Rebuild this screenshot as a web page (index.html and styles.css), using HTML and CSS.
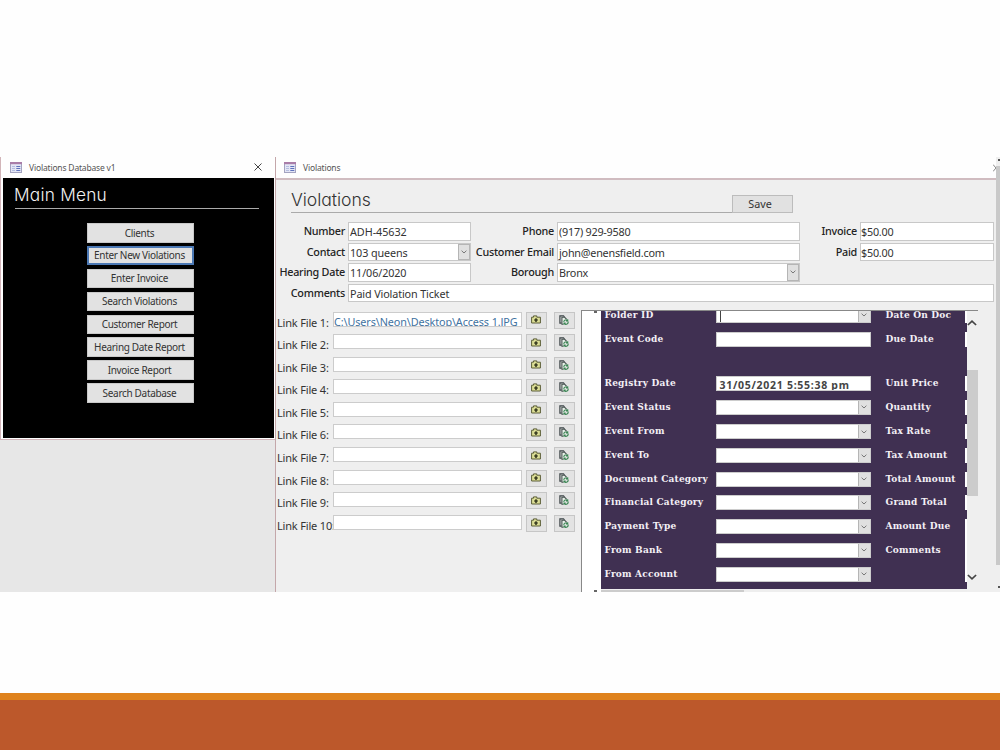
FILE: index.html
```html
<!DOCTYPE html>
<html lang="en">
<head>
<meta charset="utf-8">
<title>Violations Database</title>
<link rel="stylesheet" href="styles.css">
</head>
<body>
<svg class="defs" width="0" height="0">
  <symbol id="form" viewBox="0 0 12 11">
    <rect x=".5" y=".5" width="11" height="10" fill="#e4e6f5" stroke="#a3a3c0"/>
    <rect x="0" y="0" width="12" height="2.2" fill="#a97da8"/>
    <path d="M2 4.500h3M2 6.500h3M2 8.500h3" stroke="#b4bde0"/>
    <path d="M6.300 4.500h4M6.300 6.500h4M6.300 8.500h4" stroke="#5f72bc" stroke-width="1.200"/>
  </symbol>
  <symbol id="folder" viewBox="0 0 10 9">
    <path d="M.6 8V2.200h1.900V.9h3.300v1.300h3.600V8z" fill="#dcde96" stroke="#5c5f38" stroke-width="1"/>
    <path d="M5 3.300v3.600M3.300 5.100h3.400" stroke="#32361c" stroke-width="1.500"/>
  </symbol>
  <symbol id="files" viewBox="0 0 10 10">
    <path d="M2.600 8.200H.9V.8h3.600l1 1" fill="none" stroke="#3d4548" stroke-width="1.200"/>
    <path d="M4.500 9.200H2.900V2.300h2.800l2 2" fill="#e8f0ea" stroke="#46524f" stroke-width="1.100"/>
    <path d="M4.800 7a2.100 2.100 0 0 1 3.600-1.400M9 6.600a2.100 2.100 0 0 1-3.600 2M8.700 4.300v1.700H7M5 9.600V8.100h1.600" fill="none" stroke="#388451" stroke-width="1.100"/>
  </symbol>
  <symbol id="chev" viewBox="0 0 6 4"><path d="M.6.7 3 3 5.400.7" fill="none" stroke="#777" stroke-width="1"/></symbol>
  <symbol id="arrow" viewBox="0 0 10 6"><path d="M.9 5 5 1.200 9.100 5" fill="none" stroke="#444" stroke-width="1.700"/></symbol>
</svg>
<main class="slide">
  <div class="stage">
    <section class="left">
      <div class="menu-window">
        <header class="titlebar">
          <svg class="app"><use href="#form"/></svg><span>Violations Database v1</span>
          <svg class="close" viewBox="0 0 8 8"><path d="M.5.5l7 7M7.500.5l-7 7" stroke="#444" stroke-width="1"/></svg>
        </header>
        <div class="menu">
          <h1>Main Menu</h1>
          <nav>
            <button>Clients</button>
            <button class="focus">Enter New Violations</button>
            <button>Enter Invoice</button>
            <button>Search Violations</button>
            <button>Customer Report</button>
            <button>Hearing Date Report</button>
            <button>Invoice Report</button>
            <button>Search Database</button>
          </nav>
        </div>
      </div>
    </section>
    <section class="right">
      <header class="titlebar wide">
        <svg class="app"><use href="#form"/></svg><span>Violations</span>
      </header>
      <div class="heading"><h2>Violations</h2><button class="save">Save</button></div>
      <div class="fields">
        <label>Number</label><div class="in">ADH-45632</div><label>Phone</label><div class="in">(917) 929-9580</div><label>Invoice</label><div class="in money">$50.00</div>
        <label>Contact</label><div class="in q">103 queens<i><svg><use href="#chev"/></svg></i></div><label>Customer Email</label><div class="in mail">john@enensfield.com</div><label>Paid</label><div class="in money">$50.00</div>
        <label>Hearing Date</label><div class="in date">11/06/2020</div><label>Borough</label><div class="in">Bronx<i><svg><use href="#chev"/></svg></i></div><span></span><span></span>
        <label>Comments</label><div class="in all">Paid Violation Ticket</div>
      </div>
      <div class="lower">
        <div class="links">
          <div class="link"><label>Link File 1:</label><div class="path">C:\Users\Neon\Desktop\Access 1.JPG</div><b><svg class="fo"><use href="#folder"/></svg></b><b><svg class="fi"><use href="#files"/></svg></b></div>
          <div class="link"><label>Link File 2:</label><div class="path"></div><b><svg class="fo"><use href="#folder"/></svg></b><b><svg class="fi"><use href="#files"/></svg></b></div>
          <div class="link"><label>Link File 3:</label><div class="path"></div><b><svg class="fo"><use href="#folder"/></svg></b><b><svg class="fi"><use href="#files"/></svg></b></div>
          <div class="link"><label>Link File 4:</label><div class="path"></div><b><svg class="fo"><use href="#folder"/></svg></b><b><svg class="fi"><use href="#files"/></svg></b></div>
          <div class="link"><label>Link File 5:</label><div class="path"></div><b><svg class="fo"><use href="#folder"/></svg></b><b><svg class="fi"><use href="#files"/></svg></b></div>
          <div class="link"><label>Link File 6:</label><div class="path"></div><b><svg class="fo"><use href="#folder"/></svg></b><b><svg class="fi"><use href="#files"/></svg></b></div>
          <div class="link"><label>Link File 7:</label><div class="path"></div><b><svg class="fo"><use href="#folder"/></svg></b><b><svg class="fi"><use href="#files"/></svg></b></div>
          <div class="link"><label>Link File 8:</label><div class="path"></div><b><svg class="fo"><use href="#folder"/></svg></b><b><svg class="fi"><use href="#files"/></svg></b></div>
          <div class="link"><label>Link File 9:</label><div class="path"></div><b><svg class="fo"><use href="#folder"/></svg></b><b><svg class="fi"><use href="#files"/></svg></b></div>
          <div class="link"><label>Link File 10:</label><div class="path"></div><b><svg class="fo"><use href="#folder"/></svg></b><b><svg class="fi"><use href="#files"/></svg></b></div>
        </div>
        <div class="viewer">
          <div class="gutter"><i></i><i></i></div>
          <div class="doc">
            <div class="record">
              <label>Folder ID</label><div class="box caret"><i><svg><use href="#chev"/></svg></i></div><label>Date On Doc</label><s></s>
              <label>Event Code</label><div class="box"></div><label>Due Date</label><s></s>
              <label>Registry Date</label><div class="box stamp">31/05/2021 5:55:38 pm</div><label>Unit Price</label><s></s>
              <label>Event Status</label><div class="box"><i><svg><use href="#chev"/></svg></i></div><label>Quantity</label><s></s>
              <label>Event From</label><div class="box"><i><svg><use href="#chev"/></svg></i></div><label>Tax Rate</label><s></s>
              <label>Event To</label><div class="box"><i><svg><use href="#chev"/></svg></i></div><label>Tax Amount</label><s></s>
              <label>Document Category</label><div class="box"><i><svg><use href="#chev"/></svg></i></div><label>Total Amount</label><s></s>
              <label>Financial Category</label><div class="box"><i><svg><use href="#chev"/></svg></i></div><label>Grand Total</label><s></s>
              <label>Payment Type</label><div class="box"><i><svg><use href="#chev"/></svg></i></div><label>Amount Due</label><s></s>
              <label>From Bank</label><div class="box"><i><svg><use href="#chev"/></svg></i></div><label>Comments</label><s class="off"></s>
              <label>From Account</label><div class="box"><i><svg><use href="#chev"/></svg></i></div><span></span><s class="off"></s>
            </div>
            <div class="hscroll"><i></i></div>
          </div>
          <div class="vscroll"><svg><use href="#arrow"/></svg><i></i><svg class="down"><use href="#arrow"/></svg></div>
        </div>
      </div>
      <div class="outer-scroll"><svg class="edge-x" viewBox="0 0 3 8"><path d="M0 .5l3 3.500-3 3.500" fill="none" stroke="#888"/></svg><div class="rail"><u></u><i></i><u></u></div></div>
    </section>
  </div>
  <footer></footer>
</main>
</body>
</html>
```
FILE: styles.css
```css
* { box-sizing: border-box; }
body { margin: 0; background: #fefefe; font-family: "Noto Sans", sans-serif; color: #333; }
.defs { position: absolute; }
svg { display: block; flex: none; }
button { font: inherit; margin: 0; padding: 0; border-radius: 0; }
.slide { width: 1000px; height: 750px; display: flex; flex-direction: column; padding-top: 157px; overflow: hidden; }
.stage { height: 435px; display: flex; flex: none; }
footer { margin-top: 101px; flex: 1; background: #bc582b; border-top: 7px solid #df821d; }

.left { width: 275px; background: #e7e7e7; }
.menu-window { width: 275px; height: 283px; background: #fff; border: 1px solid #d2b5b9; border-top: 0; border-right: 0; padding: 0 1px 2px 2px; }
.titlebar { height: 21px; display: flex; align-items: center; padding-left: 7px; font-size: 8.5px; line-height: 12px; color: #555; background: #fefefe; }
.titlebar span { margin-left: 7px; letter-spacing: -.18px; }
.app { width: 12px; height: 11px; }
.close { width: 8px; height: 8px; margin-left: auto; margin-right: 12px; margin-top: -1px; }
.menu { height: 260px; background: #000; padding-left: 11px; }
h1, h2 { margin: 0; font-family: Inter, sans-serif; font-weight: 300; font-feature-settings: "cv11"; }
.menu h1 { width: 245px; height: 31px; border-bottom: 1px solid #aaa; border-image: linear-gradient(to right, #000 2px, #aaa 2px) 1; color: #f2f2f2; font-size: 17.300px; line-height: 34px; white-space: nowrap; letter-spacing: .22px; }
nav { margin: 14px 0 0 73px; width: 107px; display: grid; grid-auto-rows: 19.500px; row-gap: 3.400px; }
nav button { border: 1px solid #c9c9c9; background: #e2e2e2; font-size: 10px; line-height: 16px; color: #333; letter-spacing: -.32px; white-space: nowrap; padding-right: 2px; }
nav button:nth-child(n+2):nth-child(-n+3) { line-height: 15px; }
nav .focus { border: 2px solid #4c79b5; line-height: 13px; }
nav .focus:nth-child(2) { line-height: 13px; }

.right { position: relative; width: 725px; background: #efefef; border-left: 1px solid #c4a7aa; overflow: hidden; }
.wide { height: 23px; border-bottom: 2px solid #d0bcc0; padding-left: 8px; }
.heading { display: flex; padding-left: 15px; height: 42px; }
h2 { width: 448px; height: 33px; border-bottom: 1px solid #aaa; font-size: 17.600px; line-height: 39px; color: #333; letter-spacing: -.05px; }
.save { width: 61px; height: 18px; margin: 15px 0 0 -7px; border: 1px solid #bcbcbc; background: #e1e1e1; font-size: 10.800px; line-height: 16px; color: #333; padding-right: 5px; }
.fields { display: grid; grid-template-columns: 72px 123px 86px 243px 60px 134px; grid-template-rows: repeat(4, 18.500px); row-gap: 2px; font-size: 10.800px; line-height: 17px; }
.fields label { text-align: right; padding-right: 3px; white-space: nowrap; color: #222; letter-spacing: -.25px; font-weight: 500; line-height: 18px; }
.in { background: #fff; border: 1px solid #c8c8c8; padding-left: 1px; display: flex; white-space: nowrap; letter-spacing: -.22px; }
.money { padding-left: 0; }
.date, .q { letter-spacing: -.1px; }
.in:first-of-type { letter-spacing: -.05px; }
.in i { width: 12px; margin-left: auto; }
.all { grid-column: 2 / 7; letter-spacing: -.13px; }
i { display: block; }
.in i, .box i { background: #e0e0e0; border: 1px solid #b5b5b5; display: flex; align-items: center; justify-content: center; }
.in i svg, .box i svg { width: 6px; height: 4px; }
.lower { display: flex; margin-top: 7.500px; }
.links { width: 305px; padding: 2px 0 0 1px; }
.link { display: flex; height: 22.600px; align-items: flex-start; font-size: 11px; }
.link label { width: 56px; flex: none; line-height: 22px; white-space: nowrap; letter-spacing: -.18px; }
.path { width: 189px; height: 15px; border: 1px solid #ccc; background: #fff; color: #41729f; font-size: 10.800px; line-height: 17px; padding-left: 0; overflow: hidden; white-space: nowrap; letter-spacing: -.1px; }
.link b { width: 21px; height: 17px; margin-left: 4px; background: #e3e3e3; border: 1px solid #c6c6c6; display: flex; align-items: center; justify-content: center; padding: 0 2px 1px 0; }
.link b + b { margin-left: 7px; }
.fo { width: 10px; height: 9px; }
.fi { width: 10px; height: 10px; }

.viewer { width: 397px; height: 282px; border-left: 1px solid #888; border-top: 1px solid #888; background: #fff; display: flex; }
.gutter { width: 18.500px; flex: none; display: flex; flex-direction: column; justify-content: space-between; align-items: flex-end; padding-right: 4px; }
.gutter i { width: 3px; height: 2px; background: #666; }
.doc { width: 366px; flex: none; }
.record { height: 278px; width: 366px; background: #403052; overflow: hidden; display: grid; grid-template-columns: 115px 155px 93px 3px; grid-template-rows: 12px 24px 44px 24px 24.500px 24px 23.700px 23.700px 23.800px 23.700px 23.700px; align-content: start; font: bold 10px "DejaVu Serif", serif; font-stretch: condensed; color: #f3eff5; }
.record > * { height: 15px; align-self: end; }
.record label { padding-left: 4px; line-height: 13px; white-space: nowrap; letter-spacing: .2px; }
.record .box + label { padding-left: 15px; }
.box { background: #fff; display: flex; color: #444; border: 1px solid #ccc; }
.box i { margin-left: auto; width: 12px; border-width: 0 0 0 1px; }
.caret::before { content: ""; width: 1px; margin-left: 3px; background: #444; }
.stamp { padding-left: 3px; font: bold 10.500px/16px "Noto Sans", sans-serif; letter-spacing: .72px; overflow: hidden; white-space: nowrap; }
.record s { background: #fff; width: 2px; margin-left: 1px; }
.record .off { height: 24px; }
.hscroll { height: 3px; background: #eee; padding-top: 1px; }
.hscroll i { width: 143px; height: 2px; background: #ccc; }
.vscroll { width: 11px; background: #efefef; display: flex; flex-direction: column; padding-top: 9px; height: 281px; }
.vscroll svg { width: 10px; height: 6px; }
.vscroll i { width: 11px; height: 126px; margin-top: 44px; background: #ccc; }
.vscroll .down { transform: rotate(180deg); margin-top: 78px; }
.outer-scroll { position: absolute; right: 0; top: 0; display: flex; }
.edge-x { width: 3px; height: 8px; margin-top: 7px; }
.rail { width: 4px; height: 435px; background: #efefef; display: flex; flex-direction: column; align-items: flex-end; }
.rail i { width: 4px; height: 399px; margin: 5px 0 19px; background: #c9c9c9; }
.rail u { width: 2px; height: 2px; background: #555; margin-top: 2px; }
```
